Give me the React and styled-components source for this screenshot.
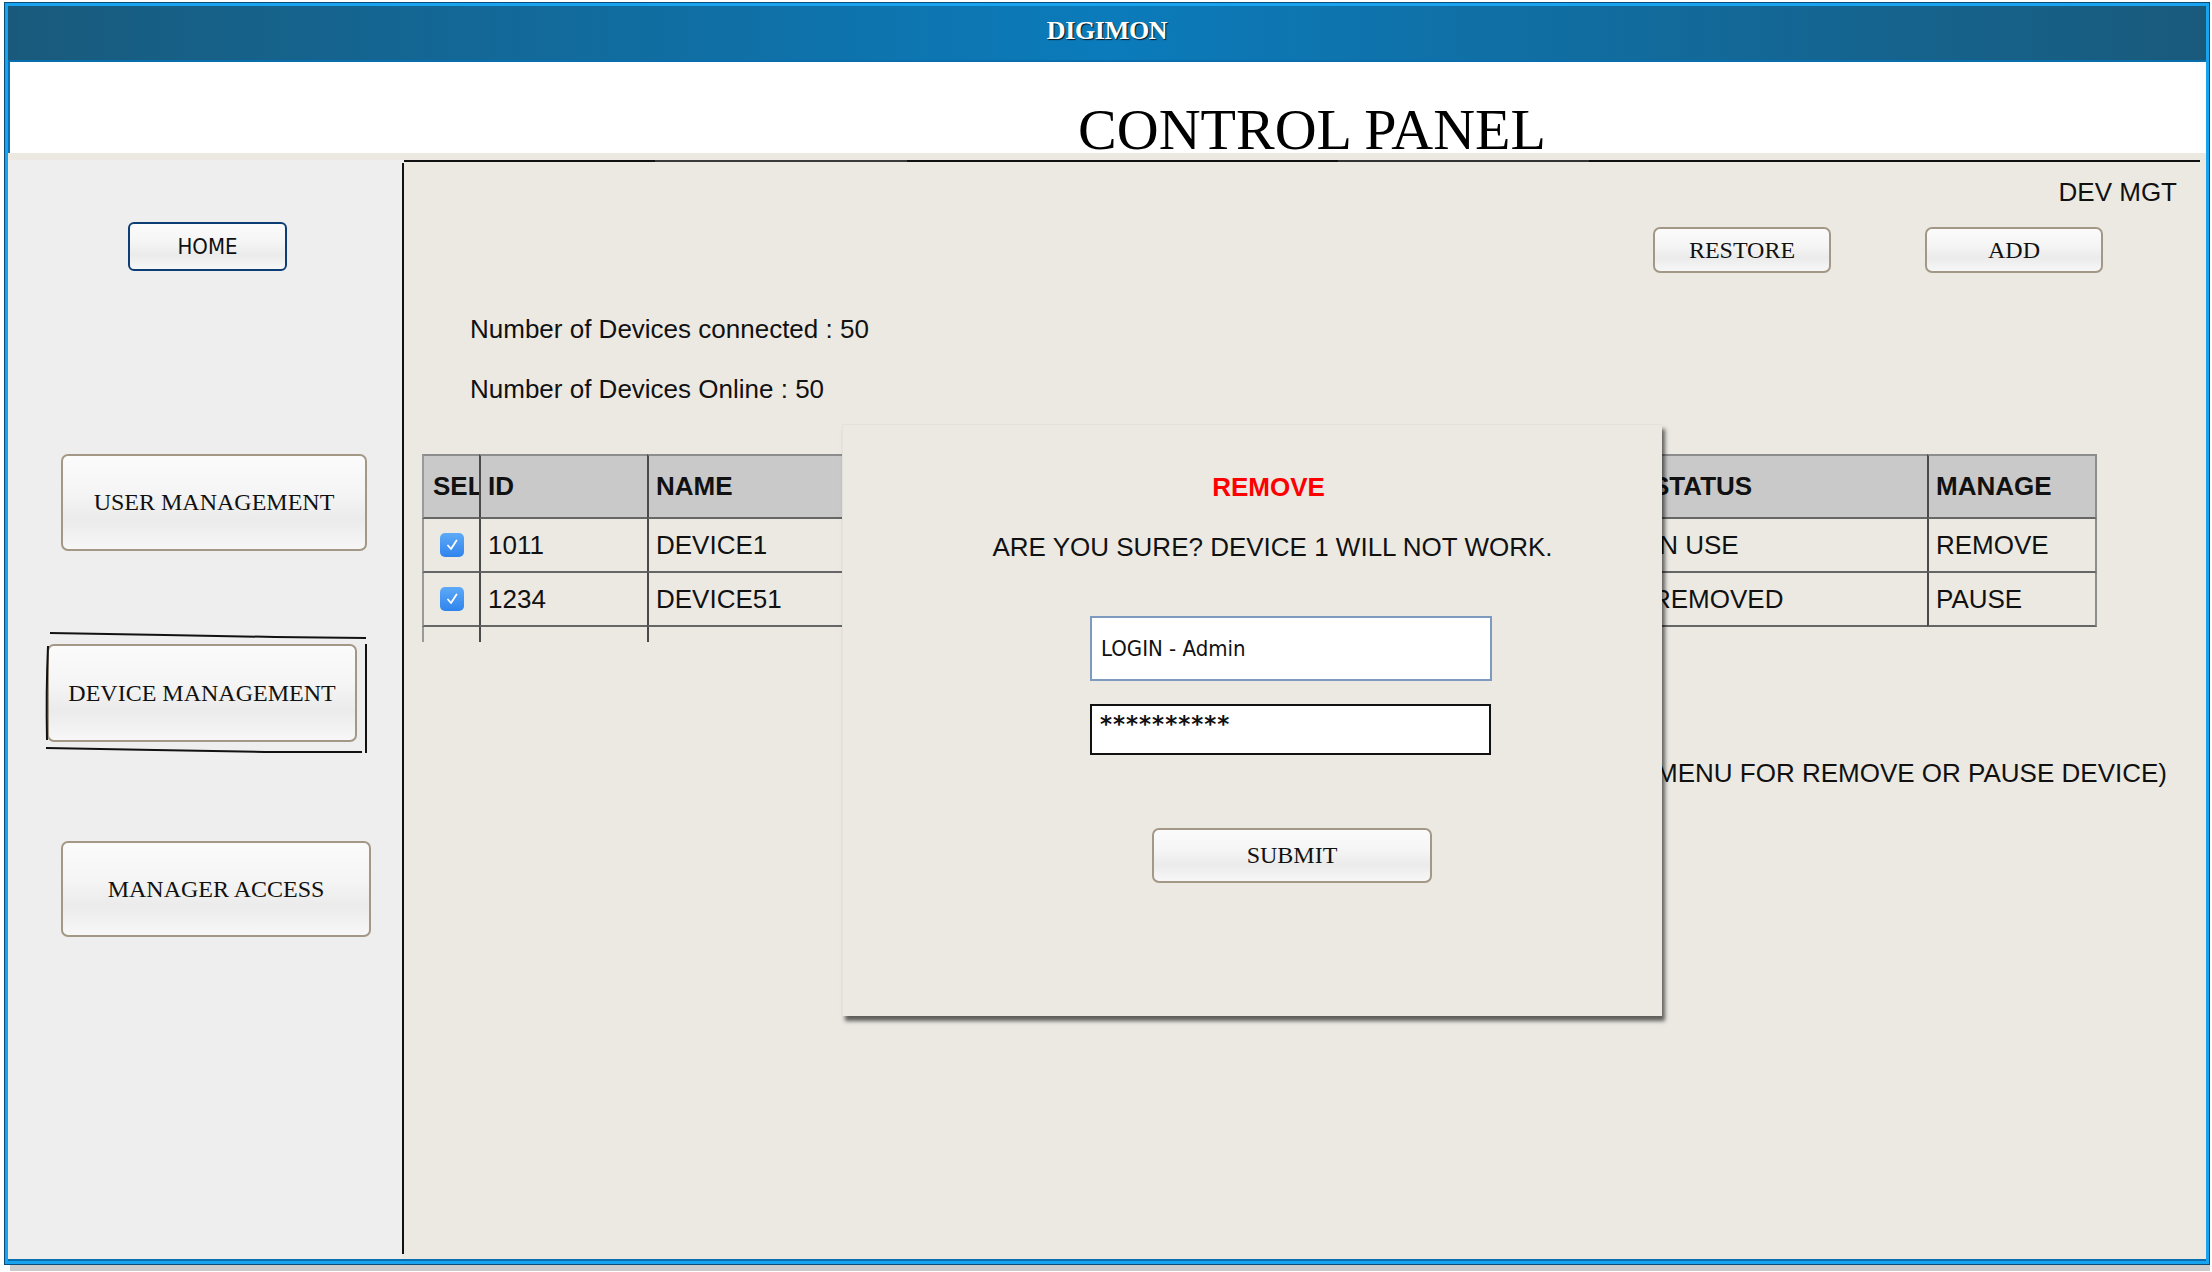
import React from "react";
import styled, { createGlobalStyle } from "styled-components";

const GlobalStyle = createGlobalStyle`
  html, body { margin: 0; padding: 0; background: #ffffff; }
  body { font-family: "Liberation Sans", Arial, sans-serif; color: #111; }
  #root { width: 2212px; height: 1272px; overflow: hidden; }
`;

const SERIF = `"Liberation Serif", "Times New Roman", serif`;
const SANS = `"Liberation Sans", Arial, sans-serif`;
const TAHOMA = `"DejaVu Sans Condensed", "Liberation Sans Narrow", "DejaVu Sans", sans-serif`;

const Frame = styled.div`
  margin: 2px 0 0 4px;
  width: 2206px;
  height: 1263px;
  box-sizing: border-box;
  border: 1px solid #0a4c7a;
  padding: 3px;
  background: #19a3ee;
  box-shadow: 3px 9px 0 -3px #cccccc;
  display: flex;
  flex-direction: column;
`;

const TopBar = styled.div`
  flex: none;
  height: 50px;
  padding-bottom: 4px;
  border-bottom: 2px solid #0a6ead;
  background: linear-gradient(90deg, #195a7c 0%, #0b7bbb 50%, #195a7c 100%);
  display: flex;
  align-items: center;
  justify-content: center;
`;

const Brand = styled.div`
  font-family: ${SERIF};
  font-weight: bold;
  font-size: 26px;
  color: #ffffff;
  text-shadow: 1px 1px 1px rgba(0, 0, 0, 0.85);
  letter-spacing: -0.3px;
`;

const TitleBand = styled.div`
  height: 91px;
  flex: none;
  background: #ffffff;
  border-left: 2px solid #0a72b4;
  display: grid;
  grid-template-columns: 392px 1fr;
`;

const Title = styled.h1`
  grid-column: 2;
  margin: 39px 0 0 0;
  padding-left: 16px;
  font-family: ${SERIF};
  font-weight: normal;
  font-size: 58px;
  line-height: 58px;
  text-align: center;
  color: #000;
  white-space: nowrap;
`;

const Strip = styled.div`
  height: 7px;
  flex: none;
  background: #ece9e3;
`;

const Body = styled.div`
  flex: 1;
  display: flex;
  border-bottom: 2px solid #0a6fae;
  min-height: 0;
`;

const Sidebar = styled.nav`
  width: 394px;
  flex: none;
  background: #eeeeee;
  display: flex;
  flex-direction: column;
  align-items: flex-start;
`;

const DividerWrap = styled.div`
  width: 2px;
  flex: none;
  display: flex;
  background: linear-gradient(180deg, #eeeeee 0 50%, #ece9e3 50% 100%);
`;

const Divider = styled.div`
  width: 2px;
  flex: none;
  background: #111;
  margin: 3px 0 5px 0;
`;

const glossy = `
  background: linear-gradient(180deg, #fbfbfb 0%, #f5f5f5 40%, #ebebeb 68%, #f0f0f0 82%, #f7f7f7 100%);
`;

const SideButton = styled.button`
  ${glossy}
  box-sizing: border-box;
  width: ${(p) => p.$w}px;
  height: ${(p) => p.$h}px;
  margin: ${(p) => p.$top}px 0 0 ${(p) => p.$left}px;
  border: 2px solid #a39886;
  border-radius: 7px;
  font-family: ${SERIF};
  font-size: 24px;
  color: #111;
  padding: 0;
  display: flex;
  align-items: center;
  justify-content: center;
  white-space: nowrap;
`;

const HomeButton = styled(SideButton)`
  border-color: #0d3d75;
  border-radius: 6px;
  font-family: ${TAHOMA};
  font-size: 22px;
`;

const SelectedWrap = styled.div`
  position: relative;
  margin: ${(p) => p.$top}px 0 0 ${(p) => p.$left}px;
  & > button { margin: 0; }
`;

const Sketch = styled.svg`
  position: absolute;
  left: -2px;
  top: -12px;
  width: 326px;
  height: 124px;
  pointer-events: none;
  overflow: visible;
`;

const Content = styled.main`
  flex: 1;
  position: relative;
  background: #ece9e3;
  display: flex;
  flex-direction: column;
`;

const TopRule = styled.div`
  height: 2px;
  margin-right: 6px;
  background: linear-gradient(90deg, #111 0 14%, #3a3a3a 14% 28%, #111 28% 52%, #333 52% 66%, #111 66% 100%);
`;

const PageTag = styled.div`
  margin-top: 15px;
  padding-right: 29px;
  text-align: right;
  font-family: ${SANS};
  font-size: 26px;
  line-height: 30px;
`;

const Actions = styled.div`
  margin-top: 20px;
  padding-right: 103px;
  display: flex;
  justify-content: flex-end;
  gap: 94px;
`;

const ActionButton = styled.button`
  ${glossy}
  box-sizing: border-box;
  width: 178px;
  height: 46px;
  border: 2px solid #a39886;
  border-radius: 7px;
  font-family: ${SERIF};
  font-size: 24px;
  color: #111;
  padding: 0;
`;

const Stats = styled.div`
  margin-top: 41px;
  padding-left: 66px;
  display: flex;
  flex-direction: column;
  gap: 30px;
`;

const StatLine = styled.div`
  font-family: ${SANS};
  font-size: 26px;
  line-height: 30px;
`;

const Table = styled.div`
  margin: 50px 0 0 18px;
  width: 1675px;
  display: grid;
  grid-template-columns: 57px 168px 996px 284px 170px;
  grid-template-rows: 65px 54px 54px 15px;
`;

const Cell = styled.div`
  box-sizing: border-box;
  display: flex;
  align-items: center;
  justify-content: ${(p) => (p.$center ? "center" : "flex-start")};
  padding-left: ${(p) => (p.$center ? 0 : p.$first ? 9 : 7)}px;
  overflow: hidden;
  white-space: nowrap;
  font-family: ${SANS};
  font-size: 26px;
  font-weight: ${(p) => (p.$head ? "bold" : "normal")};
  background: ${(p) => (p.$head ? "#c9c9c9" : "transparent")};
  border-top: ${(p) => (p.$head ? "2px solid #8d8d8d" : "none")};
  border-bottom: 2px solid #666;
  border-left: ${(p) => (p.$first ? "2px solid #9a9a9a" : "2px solid #4a4a4a")};
  border-right: ${(p) => (p.$last ? "2px solid #8d8d8d" : "none")};
`;

const StubCell = styled.div`
  box-sizing: border-box;
  border-left: ${(p) => (p.$show ? (p.$first ? "2px solid #9a9a9a" : "2px solid #4a4a4a") : "none")};
`;

const Check = styled.span`
  width: 24px;
  height: 24px;
  border-radius: 5px;
  background: linear-gradient(180deg, #5eaaf8 0%, #2f83ec 100%);
  display: inline-flex;
  align-items: center;
  justify-content: center;
`;

const Hint = styled.div`
  margin-top: 116px;
  padding-right: 39px;
  text-align: right;
  font-family: ${SANS};
  font-size: 26px;
  line-height: 30px;
  white-space: nowrap;
`;

const Modal = styled.section`
  position: absolute;
  left: 438px;
  top: 264px;
  width: 820px;
  height: 592px;
  box-sizing: border-box;
  background: #ece9e3;
  border-top: 1px solid #e4e1da;
  border-left: 1px solid #e4e1da;
  box-shadow: 3px 5px 4px rgba(0, 0, 0, 0.6);
  display: flex;
  flex-direction: column;
  align-items: flex-start;
`;

const ModalTitle = styled.h2`
  align-self: stretch;
  margin: 47px 0 0 0;
  padding-left: 32px;
  text-align: center;
  font-family: ${SANS};
  font-weight: bold;
  font-size: 26px;
  line-height: 30px;
  color: #ff0000;
`;

const ModalText = styled.p`
  align-self: stretch;
  margin: 30px 0 0 0;
  padding-left: 40px;
  text-align: center;
  font-family: ${SANS};
  font-size: 26px;
  line-height: 30px;
  white-space: nowrap;
`;

const LoginField = styled.div`
  box-sizing: border-box;
  margin: 54px 0 0 247px;
  width: 402px;
  height: 65px;
  background: #fff;
  border: 2px solid #7e9bbf;
  padding-left: 9px;
  display: flex;
  align-items: center;
  font-family: ${TAHOMA};
  font-size: 22px;
`;

const PasswordField = styled.div`
  box-sizing: border-box;
  margin: 23px 0 0 247px;
  width: 401px;
  height: 51px;
  background: #fff;
  border: 2px solid #111;
  padding: 6px 0 0 8px;
  font-family: "DejaVu Sans", sans-serif;
  font-weight: bold;
  font-size: 23px;
  line-height: 24px;
  letter-spacing: 1px;
`;

const SubmitButton = styled(ActionButton)`
  margin: 73px 0 0 309px;
  width: 280px;
  height: 55px;
`;

const rows = [
  { id: "1011", name: "DEVICE1", status: "IN USE", manage: "REMOVE" },
  { id: "1234", name: "DEVICE51", status: "REMOVED", manage: "PAUSE" },
];

function CheckBox() {
  return (
    <Check>
      <svg width="16" height="16" viewBox="0 0 16 16">
        <path d="M4 8.5 L7 12 L12.5 3.5" fill="none" stroke="#fff" strokeWidth="1.8" strokeLinecap="round" strokeLinejoin="round" />
      </svg>
    </Check>
  );
}

export default function App() {
  return (
    <>
      <GlobalStyle />
      <Frame>
        <TopBar>
          <Brand>DIGIMON</Brand>
        </TopBar>
        <TitleBand>
          <Title>CONTROL PANEL</Title>
        </TitleBand>
        <Strip />
        <Body>
          <Sidebar>
            <HomeButton $w={159} $h={49} $top={62} $left={120}>HOME</HomeButton>
            <SideButton $w={306} $h={97} $top={183} $left={53}>USER MANAGEMENT</SideButton>
            <SelectedWrap $top={93} $left={39}>
              <SideButton $w={310} $h={98} $top={0} $left={0}>DEVICE MANAGEMENT</SideButton>
              <Sketch viewBox="0 0 326 124">
                <path d="M5 1 L120 3 L230 5 L321 6" fill="none" stroke="#111" strokeWidth="2" />
                <path d="M321 12 L321 121" fill="none" stroke="#111" strokeWidth="2" />
                <path d="M1 116 L110 118 L220 120 L317 120" fill="none" stroke="#111" strokeWidth="2" />
                <path d="M3 14 Q1 60 2 108" fill="none" stroke="#111" strokeWidth="2" />
              </Sketch>
            </SelectedWrap>
            <SideButton $w={310} $h={96} $top={99} $left={53}>MANAGER ACCESS</SideButton>
          </Sidebar>
          <DividerWrap>
            <Divider />
          </DividerWrap>
          <Content>
            <TopRule />
            <PageTag>DEV MGT</PageTag>
            <Actions>
              <ActionButton>RESTORE</ActionButton>
              <ActionButton>ADD</ActionButton>
            </Actions>
            <Stats>
              <StatLine>Number of Devices connected : 50</StatLine>
              <StatLine>Number of Devices Online : 50</StatLine>
            </Stats>
            <Table>
              <Cell $head $first>SEL</Cell>
              <Cell $head>ID</Cell>
              <Cell $head>NAME</Cell>
              <Cell $head>STATUS</Cell>
              <Cell $head $last>MANAGE</Cell>
              {rows.map((r) => (
                <React.Fragment key={r.id}>
                  <Cell $first $center><CheckBox /></Cell>
                  <Cell>{r.id}</Cell>
                  <Cell>{r.name}</Cell>
                  <Cell>{r.status}</Cell>
                  <Cell $last>{r.manage}</Cell>
                </React.Fragment>
              ))}
              <StubCell $show $first />
              <StubCell $show />
              <StubCell $show />
              <StubCell />
              <StubCell />
            </Table>
            <Hint>(RIGHT CLICK MENU FOR REMOVE OR PAUSE DEVICE)</Hint>
            <Modal>
              <ModalTitle>REMOVE</ModalTitle>
              <ModalText>ARE YOU SURE? DEVICE 1 WILL NOT WORK.</ModalText>
              <LoginField>LOGIN - Admin</LoginField>
              <PasswordField>**********</PasswordField>
              <SubmitButton>SUBMIT</SubmitButton>
            </Modal>
          </Content>
        </Body>
      </Frame>
    </>
  );
}
